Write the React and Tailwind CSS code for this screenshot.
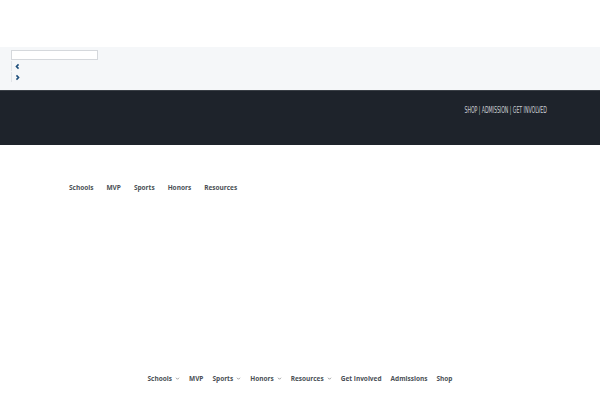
import React from "react";

function Chevron() {
  return (
    <svg viewBox="0 0 10 10" className="ml-[3px] h-[5px] w-[5px]" fill="none" stroke="#777" strokeWidth="1.4">
      <path d="M2 3.5l3 3 3-3" />
    </svg>
  );
}

export default function App() {
  const bottomNav = [
    { label: "Schools", drop: true },
    { label: "MVP" },
    { label: "Sports", drop: true },
    { label: "Honors", drop: true },
    { label: "Resources", drop: true },
    { label: "Get Involved" },
    { label: "Admissions" },
    { label: "Shop" },
  ];

  return (
    <div className="h-[400px] w-[600px] overflow-hidden bg-white" style={{ fontFamily: "'Open Sans', sans-serif" }}>
      <div className="h-[47px]" />

      <div className="h-[43px] bg-[#f5f7f9] pl-[11px] pt-[3px]">
        <div className="h-[10px] w-[87px] border border-[#d5d8dc] bg-white" />
        <div className="mt-[1px] flex flex-col gap-[1px]">
          <button className="flex h-[10px] w-[10px] items-center justify-center border-l border-[#e1e4e8] pl-[2px]">
            <svg viewBox="0 0 10 10" className="h-[7px] w-[7px]" fill="none" stroke="#1b4c7a" strokeWidth="2.2">
              <path d="M6.5 2L3.5 5l3 3" />
            </svg>
          </button>
          <button className="flex h-[10px] w-[10px] items-center justify-center border-l border-[#e1e4e8] pl-[2px]">
            <svg viewBox="0 0 10 10" className="h-[7px] w-[7px]" fill="none" stroke="#1b4c7a" strokeWidth="2.2">
              <path d="M3.5 2l3 3-3 3" />
            </svg>
          </button>
        </div>
      </div>

      <div className="flex h-[55px] items-start justify-end border-t border-[#3a3f46] bg-[#1e232b] pr-[53px] pt-[14px]">
        <p
          className="origin-right scale-x-[0.66] text-[8px] uppercase tracking-[-0.1px] text-[#c9cdd2]"
          style={{ fontFamily: "'Liberation Sans Narrow', 'DejaVu Sans Condensed', sans-serif", fontStretch: "condensed" }}
        >
          Shop | Admission | Get Involved
        </p>
      </div>

      <nav className="flex gap-[13px] pl-[69px] pt-[38px] text-[6.5px] font-bold text-[#4a4f55]">
        <a>Schools</a>
        <a>MVP</a>
        <a>Sports</a>
        <a>Honors</a>
        <a>Resources</a>
      </nav>

      <nav className="mt-[181px] flex justify-center gap-[9px] text-[6.5px] font-bold text-[#4a4f55]">
        {bottomNav.map((item) => (
          <a key={item.label} className="flex items-center">
            {item.label}
            {item.drop && <Chevron />}
          </a>
        ))}
      </nav>
    </div>
  );
}
